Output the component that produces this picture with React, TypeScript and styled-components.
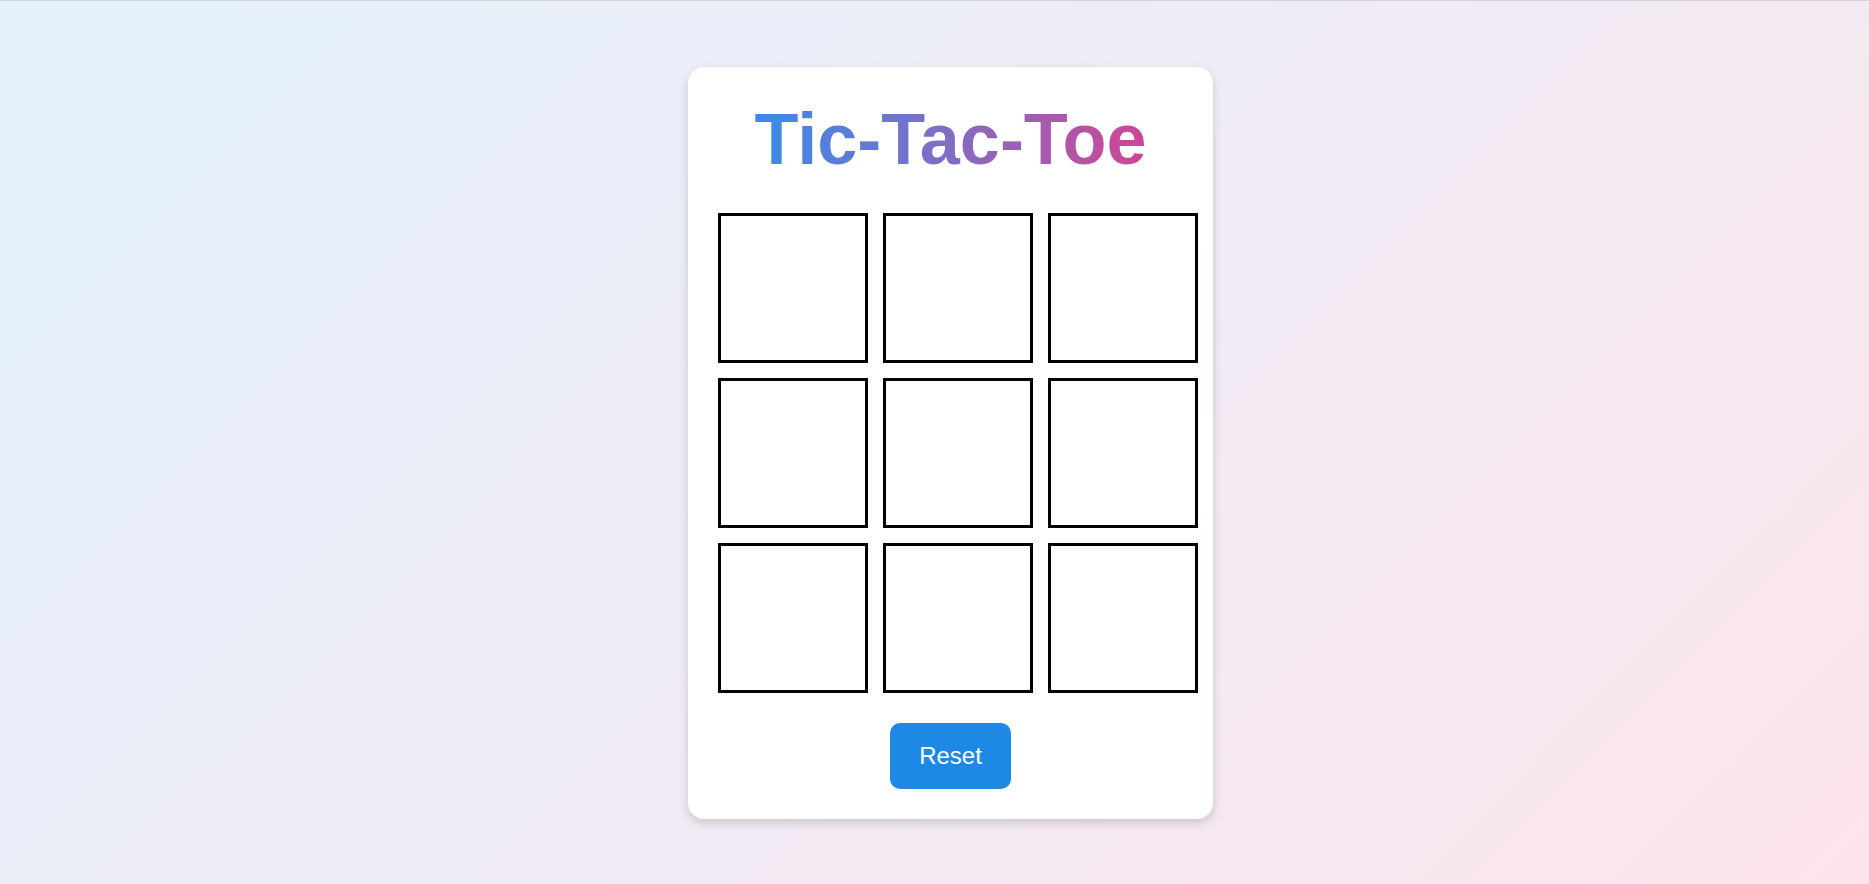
import React, { useState } from "react";
import styled, { createGlobalStyle } from "styled-components";

const GlobalStyle = createGlobalStyle`
  html, body {
    margin: 0;
    padding: 0;
  }
  body {
    font-family: "Liberation Sans", Arial, sans-serif;
  }
`;

const Page = styled.div`
  box-sizing: border-box;
  min-height: 100vh;
  display: flex;
  align-items: center;
  justify-content: center;
  padding-left: 32px;
  border-top: 1px solid #cfd3d8;
  background: linear-gradient(135deg, #e3f2fd 0%, #fce4ec 100%);
`;

const Card = styled.div`
  box-sizing: border-box;
  width: 525px;
  padding: 30px;
  display: flex;
  flex-direction: column;
  align-items: flex-start;
  background: #ffffff;
  border-radius: 16px;
  box-shadow: 0 4px 10px rgba(0, 0, 0, 0.16);
`;

const TitleRow = styled.div`
  align-self: stretch;
  display: flex;
  justify-content: center;
  margin: 2px 0 34px;
`;

const Title = styled.h1`
  margin: 0;
  font-size: 72px;
  line-height: 80px;
  font-weight: 700;
  background: linear-gradient(90deg, #3a8ae8 0%, #7a70c6 45%, #cf4597 100%);
  -webkit-background-clip: text;
  background-clip: text;
  color: transparent;
`;

const Board = styled.div`
  display: grid;
  grid-template-columns: repeat(3, 150px);
  grid-auto-rows: 150px;
  gap: 15px;
`;

const Cell = styled.button`
  box-sizing: border-box;
  width: 150px;
  height: 150px;
  padding: 0;
  background: #ffffff;
  border: 3px solid #000000;
  border-radius: 0;
  font-family: "Liberation Sans", Arial, sans-serif;
  font-size: 72px;
  font-weight: 700;
  color: #333333;
  cursor: pointer;
`;

const Footer = styled.div`
  align-self: stretch;
  display: flex;
  justify-content: center;
  margin-top: 30px;
`;

const ResetButton = styled.button`
  padding: 19px 29px;
  border: none;
  border-radius: 10px;
  background: #1e88e5;
  color: #ffffff;
  font-family: "Liberation Sans", Arial, sans-serif;
  font-size: 24px;
  line-height: 28px;
  cursor: pointer;
`;

export default function App() {
  const [cells, setCells] = useState<(string | null)[]>(Array(9).fill(null));
  const [xNext, setXNext] = useState(true);

  const play = (i: number) => {
    if (cells[i]) return;
    const next = cells.slice();
    next[i] = xNext ? "X" : "O";
    setCells(next);
    setXNext(!xNext);
  };

  return (
    <>
      <GlobalStyle />
      <Page>
        <Card>
          <TitleRow>
            <Title>Tic-Tac-Toe</Title>
          </TitleRow>
          <Board>
            {cells.map((v, i) => (
              <Cell key={i} onClick={() => play(i)}>
                {v}
              </Cell>
            ))}
          </Board>
          <Footer>
            <ResetButton
              onClick={() => {
                setCells(Array(9).fill(null));
                setXNext(true);
              }}
            >
              Reset
            </ResetButton>
          </Footer>
        </Card>
      </Page>
    </>
  );
}
